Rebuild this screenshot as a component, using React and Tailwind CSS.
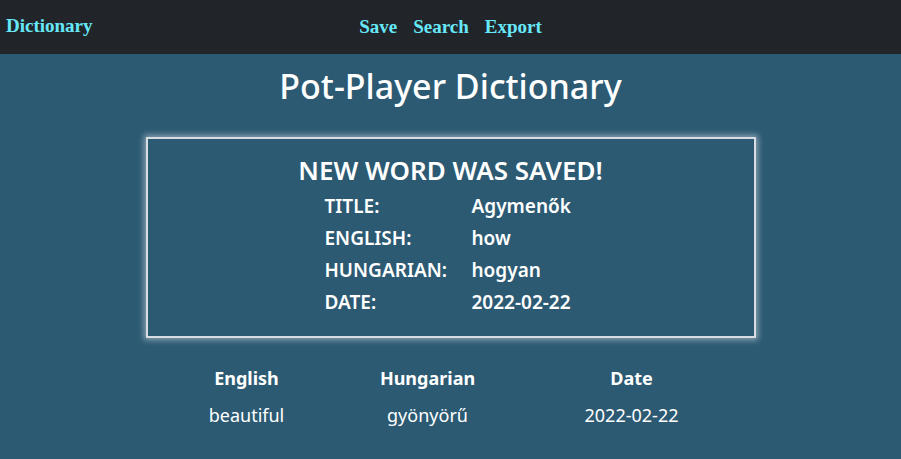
export default function App() {
  const saved = [
    ['TITLE:', 'Agymenők'],
    ['ENGLISH:', 'how'],
    ['HUNGARIAN:', 'hogyan'],
    ['DATE:', '2022-02-22'],
  ];

  return (
    <div className="min-h-[459px] bg-[#2c5a73] text-white font-['Noto_Sans',sans-serif]">
      {/* Navbar */}
      <nav className="h-[54px] bg-[#212529] relative flex items-center justify-center font-['Liberation_Serif',serif] font-bold text-[19px] text-[#67e8f9]">
        <span className="absolute left-[6px] top-[12px]">Dictionary</span>
        <div className="flex gap-[16px]">
          <span>Save</span>
          <span>Search</span>
          <span>Export</span>
        </div>
      </nav>

      <h1 className="text-center text-[34px] font-medium mt-[10px] leading-[44px]">Pot-Player Dictionary</h1>

      {/* Saved box */}
      <div className="mx-auto mt-[29px] w-[610px] h-[201px] border-2 border-[#d7dde2] shadow-[0_0_6px_2px_rgba(255,255,255,0.45)] pt-[14px]">
        <h2 className="text-center text-[26px] font-semibold leading-[34px]">NEW WORD WAS SAVED!</h2>
        <div className="ml-[177px] mt-[3px]">
          {saved.map(([k, v]) => (
            <div key={k} className="flex text-[19px] font-semibold leading-[32px]">
              <span className="w-[147px]">{k}</span>
              <span>{v}</span>
            </div>
          ))}
        </div>
      </div>

      {/* Table */}
      <div className="mx-auto mt-[25px] w-[610px] grid grid-cols-[202px_160px_248px] text-center text-[18px]">
        <div className="font-bold leading-[30px]">English</div>
        <div className="font-bold leading-[30px]">Hungarian</div>
        <div className="font-bold leading-[30px]">Date</div>
        <div className="mt-[7px] leading-[30px]">beautiful</div>
        <div className="mt-[7px] leading-[30px]">gyönyörű</div>
        <div className="mt-[7px] leading-[30px]">2022-02-22</div>
      </div>
    </div>
  );
}
